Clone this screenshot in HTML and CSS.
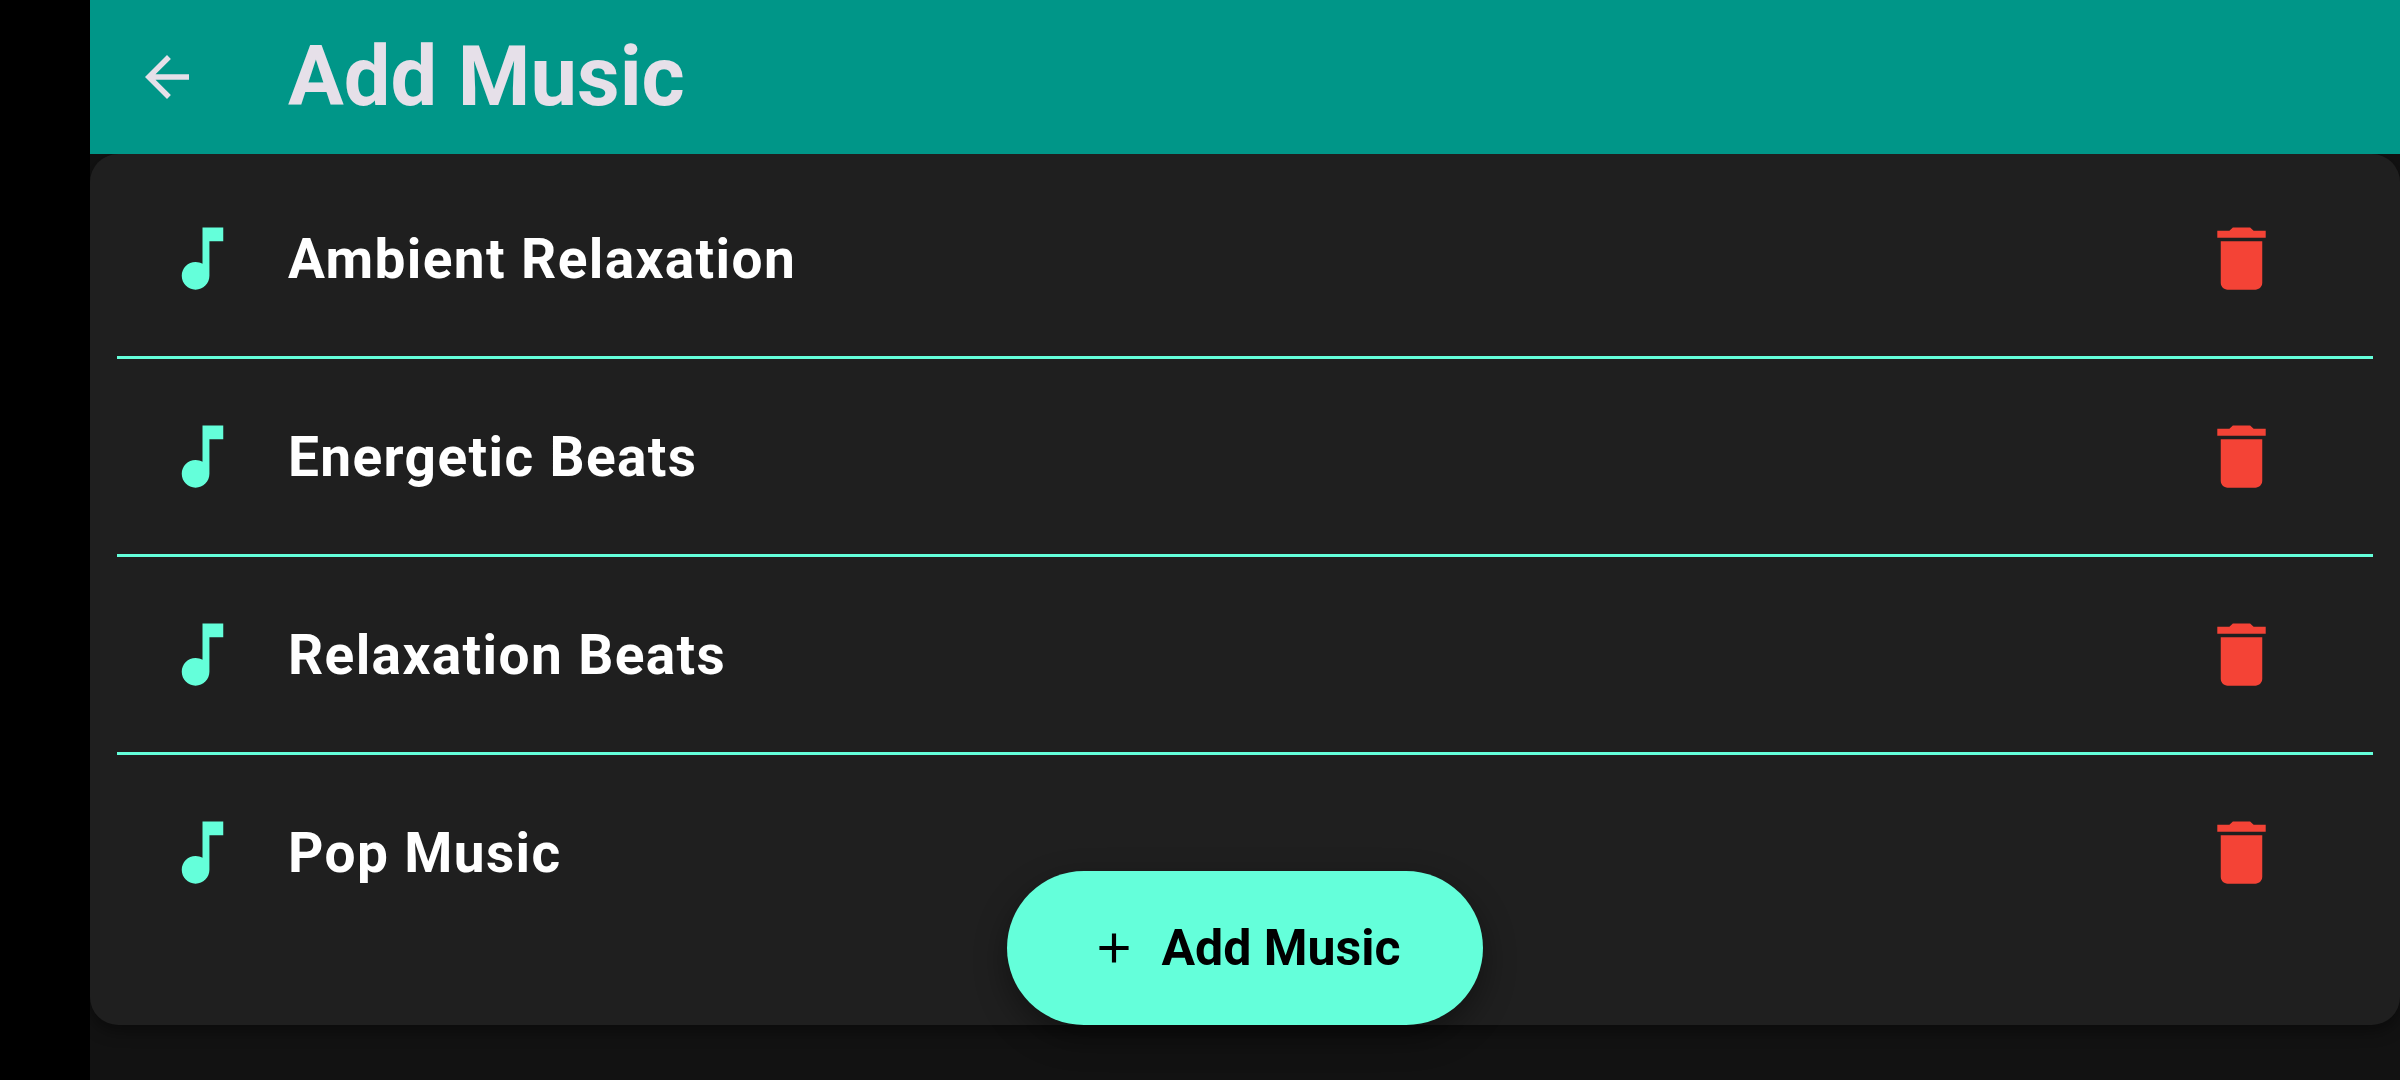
FILE: index.html
```html
<!DOCTYPE html>
<html lang="en">
<head>
<meta charset="utf-8">
<meta name="viewport" content="width=device-width, initial-scale=1">
<title>Add Music</title>
<link rel="stylesheet" href="styles.css">
</head>
<body>
<svg class="sprite" aria-hidden="true">
  <symbol id="note" viewBox="0 0 24 24"><path d="M12 3v10.55c-.59-.34-1.27-.55-2-.55-2.21 0-4 1.79-4 4s1.79 4 4 4 4-1.79 4-4V7h4V3h-6z"/></symbol>
  <symbol id="trash" viewBox="0 0 24 24"><path d="M6 19c0 1.1.9 2 2 2h8c1.1 0 2-.9 2-2V7H6v12zM19 4h-3.5l-1-1h-5l-1 1H5v2h14V4z"/></symbol>
</svg>
<div class="screen">
  <header class="app-bar">
    <button class="icon-button" type="button" aria-label="Back">
      <svg class="icon icon-back" viewBox="0 0 24 24"><path d="M20 11H7.83l5.59-5.59L12 4l-8 8 8 8 1.41-1.41L7.83 13H20v-2z"/></svg>
    </button>
    <h1 class="title">Add Music</h1>
  </header>
  <main class="content">
    <ul class="card">
      <li class="track">
        <svg class="icon icon-note"><use href="#note"/></svg>
        <span class="track-name">Ambient Relaxation</span>
        <button class="icon-button" type="button" aria-label="Delete Ambient Relaxation"><svg class="icon icon-trash"><use href="#trash"/></svg></button>
      </li>
      <li class="track">
        <svg class="icon icon-note"><use href="#note"/></svg>
        <span class="track-name">Energetic Beats</span>
        <button class="icon-button" type="button" aria-label="Delete Energetic Beats"><svg class="icon icon-trash"><use href="#trash"/></svg></button>
      </li>
      <li class="track">
        <svg class="icon icon-note"><use href="#note"/></svg>
        <span class="track-name">Relaxation Beats</span>
        <button class="icon-button" type="button" aria-label="Delete Relaxation Beats"><svg class="icon icon-trash"><use href="#trash"/></svg></button>
      </li>
      <li class="track">
        <svg class="icon icon-note"><use href="#note"/></svg>
        <span class="track-name">Pop Music</span>
        <button class="icon-button" type="button" aria-label="Delete Pop Music"><svg class="icon icon-trash"><use href="#trash"/></svg></button>
      </li>
    </ul>
    <div class="fab-layer">
      <button class="fab" type="button">
        <svg class="icon icon-plus" viewBox="0 0 24 24"><path d="M19 13h-6v6h-2v-6H5v-2h6V5h2v6h6v2z"/></svg>
        Add Music
      </button>
    </div>
  </main>
</div>
</body>
</html>
```

FILE: styles.css
```css
* {
  box-sizing: border-box;
}

body {
  margin: 0;
  background: #000;
  font-family: Roboto, sans-serif;
  font-weight: 700;
}

button {
  border: 0;
  font: inherit;
  cursor: pointer;
}

.sprite {
  display: none;
}

.screen {
  display: flex;
  flex-direction: column;
  min-height: 100vh;
  margin-left: 90px;
  background: #121212;
}

.app-bar {
  display: flex;
  align-items: center;
  gap: 88px;
  position: relative;
  z-index: 1;
  height: 154px;
  padding: 0 44px;
  background: #009688;
  color: #e6e0e9;
}

.title {
  margin: 0;
  font-size: 83px;
  line-height: 96px;
}

.icon {
  display: block;
  flex: none;
  fill: currentColor;
}

.icon-button {
  padding: 0;
  background: none;
  color: inherit;
}

.icon-back {
  width: 66px;
  height: 66px;
}

.content {
  display: flex;
  flex: 1;
  flex-direction: column;
  position: relative;
  padding-bottom: 55px;
}

.card {
  flex: 1;
  margin: 0;
  padding: 7px 27px;
  border-radius: 28px;
  background: #1f1f1f;
  box-shadow: 0 6px 16px rgba(0, 0, 0, 0.4);
  list-style: none;
}

.track {
  display: flex;
  align-items: center;
  gap: 44px;
  height: 198px;
  padding: 0 90px 0 44px;
  border-bottom: 3px solid #64ffda;
}

.track:last-child {
  border-bottom-color: transparent;
}

.track-name {
  flex: 1;
  color: #fff;
  font-size: 55px;
  line-height: 66px;
  letter-spacing: 0.025em;
}

.icon-note,
.icon-trash {
  width: 83px;
  height: 83px;
}

.icon-note {
  color: #64ffda;
}

.icon-trash {
  color: #f44336;
}

.fab-layer {
  display: flex;
  justify-content: center;
  position: absolute;
  right: 0;
  bottom: 55px;
  left: 0;
}

.fab {
  display: flex;
  align-items: center;
  gap: 22px;
  height: 154px;
  padding: 0 82px;
  border-radius: 77px;
  background: #64ffda;
  color: #000;
  font-size: 50px;
  line-height: 60px;
  box-shadow: 0 12px 32px rgba(0, 0, 0, 0.4);
}

.icon-plus {
  width: 50px;
  height: 50px;
}
```
